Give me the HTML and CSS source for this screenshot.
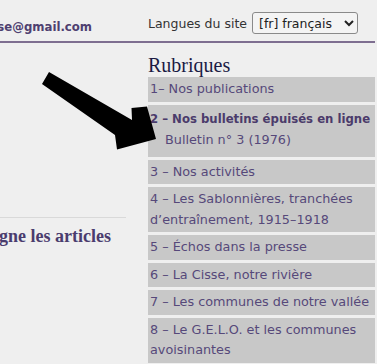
FILE: index.html
```html
<!DOCTYPE html>
<html lang="fr">
<head>
    <meta charset="UTF-8">
    <meta name="viewport" content="width=device-width, initial-scale=1.0">
    <title>Nos bulletins épuisés en ligne</title>
    <link rel="stylesheet" href="styles.css">
</head>
<body>
    <div class="page">
        <header class="top">
            <div class="contact"><span>Contact : association.la.cisse@gmail.com</span></div>
            <form class="lang">
                <label for="langSelect">Langues du site</label>
                <select id="langSelect">
                    <option>[fr] français</option>
                    <option>[en] English</option>
                </select>
            </form>
        </header>

        <div class="main">
            <div class="content">
                <hr class="sep">
                <h2 class="article-title"><span>Mise en ligne les articles</span></h2>
            </div>

            <aside class="sidebar">
                <h3>Rubriques</h3>
                <ul class="rubriques">
                    <li><a href="#">1– Nos publications</a></li>
                    <li class="active">
                        <a href="#" class="current">2 – Nos bulletins épuisés en ligne</a>
                        <ul class="sub">
                            <li><a href="#">Bulletin n° 3 (1976)</a></li>
                        </ul>
                    </li>
                    <li><a href="#">3 – Nos activités</a></li>
                    <li><a href="#">4 – Les Sablonnières, tranchées d’entraînement, 1915–1918</a></li>
                    <li><a href="#">5 – Échos dans la presse</a></li>
                    <li><a href="#">6 – La Cisse, notre rivière</a></li>
                    <li><a href="#">7 – Les communes de notre vallée</a></li>
                    <li><a href="#">8 – Le G.E.L.O. et les communes avoisinantes</a></li>
                </ul>
            </aside>
        </div>

        <!-- arrow drawn over the page, pointing at the current rubrique -->
        <svg class="arrow" width="377" height="364" viewBox="0 0 377 364">
            <polygon points="49,72 132,120 131.5,108 147,106.5 156,139 117,149.5 115,135 42,84" fill="#000"/>
        </svg>
    </div>
</body>
</html>
```

FILE: styles.css
```css
* {
    margin: 0;
    padding: 0;
    box-sizing: border-box;
}
body {
    background-color: #efefef;
    font-family: "DejaVu Sans", Verdana, sans-serif;
    font-size: 12.8px;
    color: #56487a;
}
a {
    color: #56487a;
    text-decoration: none;
}
.page {
    position: relative;
    width: 375px;
    height: 364px;
    overflow: hidden;
}
.top {
    display: grid;
    grid-template-columns: 126px 1fr;
    column-gap: 22px;
    height: 43px;
    border-bottom: 2px solid #7e6e90;
}
.contact {
    display: flex;
    justify-content: flex-end;
    overflow: hidden;
    white-space: nowrap;
    padding: 19px 34px 0 0;
    line-height: 16px;
    font-family: "DejaVu Sans Condensed", "DejaVu Sans", sans-serif;
    font-size: 13px;
    font-weight: bold;
    color: #4e4070;
}
.lang {
    display: flex;
    align-items: center;
    gap: 5px;
    padding-top: 12px;
    height: 34px;
    font-size: 12.5px;
    color: #333;
    white-space: nowrap;
}
.lang select {
    width: 106px;
    height: 22px;
    font-family: "DejaVu Sans", Verdana, sans-serif;
    font-size: 12.5px;
    color: #222;
    background-color: #f4f4f4;
    border: 1px solid #8a8a8a;
    border-radius: 3px;
    padding: 0 2px;
}
.main {
    display: grid;
    grid-template-columns: 126px 1fr;
    column-gap: 22px;
}
.content {
    padding-top: 174px;
}
.sep {
    border: none;
    border-top: 1px solid #d9d9d9;
}
.article-title {
    display: flex;
    justify-content: flex-end;
    overflow: hidden;
    white-space: nowrap;
    margin-top: 8px;
    padding-right: 15px;
    font-family: "Liberation Serif", "Times New Roman", serif;
    font-size: 18px;
    line-height: 21px;
    color: #4a3c6e;
}
.sidebar h3 {
    margin-top: 10px;
    font-family: "Liberation Serif", "Times New Roman", serif;
    font-size: 20px;
    font-weight: normal;
    line-height: 24px;
    color: #1b1b44;
}
.rubriques {
    list-style: none;
}
.rubriques > li {
    background-color: #c8c8c8;
    margin-bottom: 3px;
    padding: 2px 0 2px 2px;
    line-height: 20.5px;
}
.rubriques > li.active {
    padding: 4px 0 7px 2px;
}
.rubriques .current {
    font-family: "DejaVu Sans Condensed", "DejaVu Sans", sans-serif;
    font-size: 13px;
    font-weight: bold;
    color: #4b3b6b;
    line-height: 20px;
    display: block;
    white-space: nowrap;
}
.sub {
    list-style: none;
    padding-left: 15px;
    line-height: 21px;
}
.arrow {
    position: absolute;
    top: 0;
    left: 0;
    pointer-events: none;
}
```
